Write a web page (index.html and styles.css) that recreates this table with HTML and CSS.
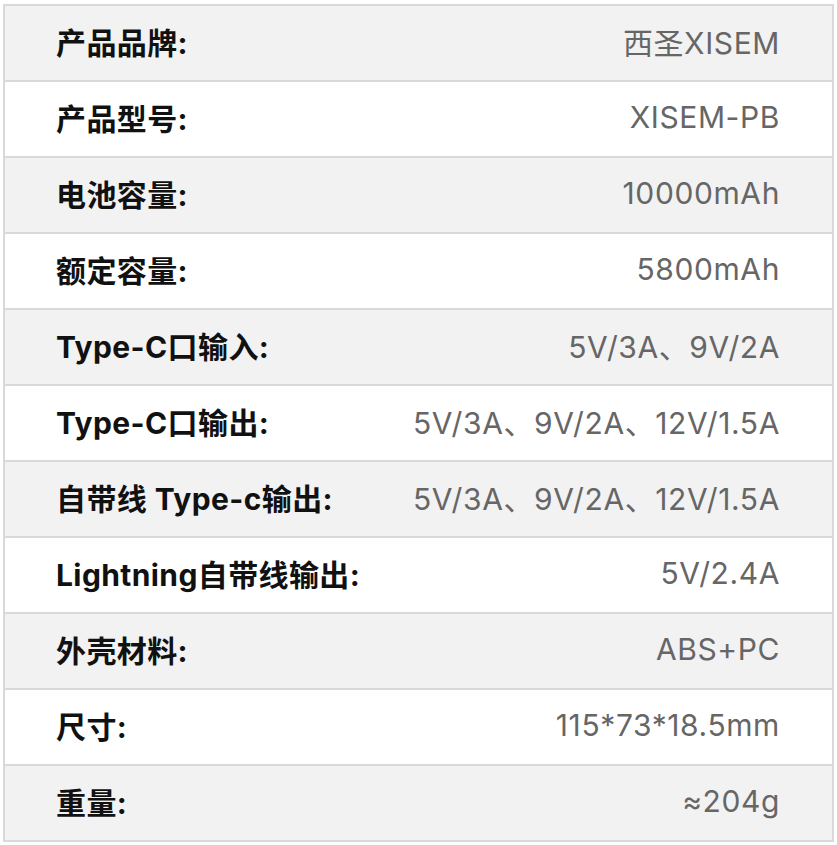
FILE: index.html
```html
<!DOCTYPE html>
<html lang="zh">
<head>
<meta charset="utf-8">
<link rel="stylesheet" href="styles.css">
</head>
<body>
<div class="spec">
  <div class="row"><span class="k">产品品牌:</span><span class="v">西圣XISEM</span></div>
  <div class="row"><span class="k">产品型号:</span><span class="v">XISEM-PB</span></div>
  <div class="row"><span class="k">电池容量:</span><span class="v">10000mAh</span></div>
  <div class="row"><span class="k">额定容量:</span><span class="v">5800mAh</span></div>
  <div class="row"><span class="k">Type-C口输入:</span><span class="v">5V/3A、9V/2A</span></div>
  <div class="row"><span class="k">Type-C口输出:</span><span class="v">5V/3A、9V/2A、12V/1.5A</span></div>
  <div class="row"><span class="k">自带线 Type-c输出:</span><span class="v">5V/3A、9V/2A、12V/1.5A</span></div>
  <div class="row"><span class="k">Lightning自带线输出:</span><span class="v">5V/2.4A</span></div>
  <div class="row"><span class="k">外壳材料:</span><span class="v">ABS+PC</span></div>
  <div class="row"><span class="k">尺寸:</span><span class="v">115*73*18.5mm</span></div>
  <div class="row"><span class="k">重量:</span><span class="v">≈204g</span></div>
</div>
</body>
</html>
```
FILE: styles.css
```css
html, body {
  margin: 0;
  padding: 0;
  background: #ffffff;
}
body {
  padding: 4px 3px 0 3px;
  font-family: Inter, "Noto Sans CJK SC", sans-serif;
}
.spec {
  width: 831px;
  border: 2px solid #d9d9d9;
  border-bottom: none;
  box-sizing: border-box;
}
.row {
  display: flex;
  justify-content: space-between;
  align-items: center;
  height: 76px;
  box-sizing: border-box;
  border-bottom: 2px solid #d9d9d9;
  padding: 0 52px 0 51px;
  background: #ffffff;
}
.row:nth-child(odd) {
  background: #f2f2f2;
}
.k {
  font-size: 30px;
  font-weight: 700;
  color: #111111;
  margin-top: -4px;
  letter-spacing: 0.4px;
}
.v {
  font-size: 30px;
  color: #666666;
  margin-top: -4px;
  letter-spacing: 0.6px;
}
```
